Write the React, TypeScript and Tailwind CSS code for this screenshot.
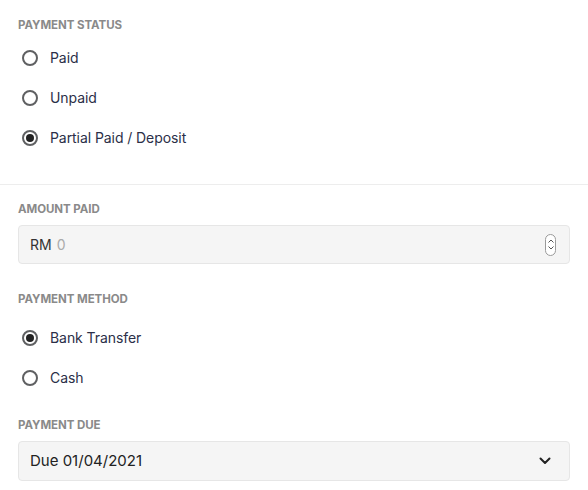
import React from "react";

function Radio({ label, checked }: { label: string; checked?: boolean }) {
  return (
    <div className="flex h-[40px] items-center">
      <div className="ml-[22px] flex h-[16px] w-[16px] items-center justify-center rounded-full border-[2px] border-[#5f6062]">
        {checked && <div className="h-[8px] w-[8px] rounded-full bg-[#222]" />}
      </div>
      <span className="ml-[12px] text-[14px] leading-[20px] tracking-[-0.005em] text-[#2b2f48]">{label}</span>
    </div>
  );
}

function Label({ children }: { children: React.ReactNode }) {
  return (
    <div className="ml-[18px] text-[11.5px] font-bold uppercase leading-[13px] tracking-[-0.005em] text-[#8a8a8a]">
      {children}
    </div>
  );
}

export default function App() {
  return (
    <div className="h-[490px] w-[588px] bg-white" style={{ fontFamily: "Inter, 'Noto Sans', sans-serif" }}>
      <div className="pt-[19px] pb-[26px]">
        <Label>Payment Status</Label>
        <div className="mt-[6px]">
          <Radio label="Paid" />
          <Radio label="Unpaid" />
          <Radio label="Partial Paid / Deposit" checked />
        </div>
      </div>
      <div className="h-px bg-[#ededed]" />
      <div className="pt-[18px]">
        <Label>Amount Paid</Label>
        <div className="mx-[18px] mt-[9px] flex h-[39px] items-center rounded-[4px] border border-[#e6e6e6] bg-[#f5f5f5] pl-[11px] pr-[13px]">
          <span className="text-[14px] text-[#333]">RM</span>
          <span className="ml-[5px] text-[14px] text-[#aaa]">0</span>
          <div className="ml-auto flex h-[22px] w-[11px] flex-col items-center justify-center gap-[3px] rounded-full border border-[#9a9a9a] bg-white">
            <svg width="6" height="4" viewBox="0 0 6 4"><path d="M0.5 3.5 L3 1 L5.5 3.5" fill="none" stroke="#555" strokeWidth="1" /></svg>
            <svg width="6" height="4" viewBox="0 0 6 4"><path d="M0.5 0.5 L3 3 L5.5 0.5" fill="none" stroke="#555" strokeWidth="1" /></svg>
          </div>
        </div>
        <div className="mt-[29px]">
          <Label>Payment Method</Label>
        </div>
        <div className="mt-[12px]">
          <Radio label="Bank Transfer" checked />
          <Radio label="Cash" />
        </div>
        <div className="mt-[21px]">
          <Label>Payment Due</Label>
        </div>
        <div className="mx-[18px] mt-[9px] flex h-[40px] items-center rounded-[4px] border border-[#e6e6e6] bg-[#f5f5f5] pl-[11px] pr-[18px]">
          <span className="text-[15px] text-[#222]">Due 01/04/2021</span>
          <svg className="ml-auto" width="12" height="8" viewBox="0 0 12 8">
            <path d="M1.5 1.5 L6 6 L10.5 1.5" fill="none" stroke="#222" strokeWidth="2" strokeLinecap="round" strokeLinejoin="round" />
          </svg>
        </div>
      </div>
    </div>
  );
}
